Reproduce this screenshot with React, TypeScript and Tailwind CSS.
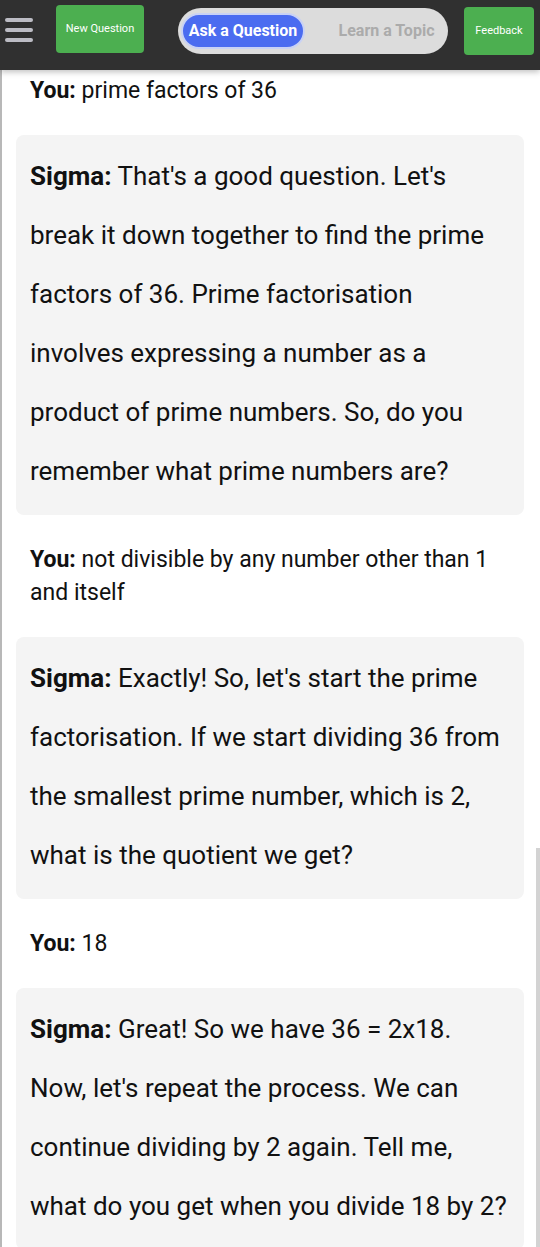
import React from 'react';

type Msg = { from: 'You' | 'Sigma'; text: string };

const messages: Msg[] = [
  { from: 'You', text: 'prime factors of 36' },
  {
    from: 'Sigma',
    text: "That's a good question. Let's break it down together to find the prime factors of 36. Prime factorisation involves expressing a number as a product of prime numbers. So, do you remember what prime numbers are?",
  },
  { from: 'You', text: 'not divisible by any number other than 1 and itself' },
  {
    from: 'Sigma',
    text: "Exactly! So, let's start the prime factorisation. If we start dividing 36 from the smallest prime number, which is 2, what is the quotient we get?",
  },
  { from: 'You', text: '18' },
  {
    from: 'Sigma',
    text: "Great! So we have 36 = 2x18. Now, let's repeat the process. We can continue dividing by 2 again. Tell me, what do you get when you divide 18 by 2?",
  },
];

const App: React.FC = () => {
  return (
    <div className="relative flex min-h-[1247px] flex-col bg-white font-['Roboto',sans-serif] text-[#111]">
      {/* Top bar */}
      <header className="sticky top-0 z-10 flex h-[70px] shrink-0 items-start bg-[#303030] shadow-[0_2px_6px_rgba(0,0,0,0.25)]">
        <button className="ml-[5px] mt-[18px] flex w-[28px] flex-col gap-[6px]">
          <span className="h-[4px] w-full rounded-full bg-[#bcbcc4]" />
          <span className="h-[4px] w-full rounded-full bg-[#bcbcc4]" />
          <span className="h-[4px] w-full rounded-full bg-[#bcbcc4]" />
        </button>
        <button className="ml-[23px] mt-[5px] h-[48px] w-[88px] rounded-[4px] bg-[#4caf50] text-[11px] text-white">
          New Question
        </button>
        <div className="ml-[34px] mt-[8px] flex h-[46px] w-[270px] items-center rounded-full bg-[#dcdcdc] pl-[3px]">
          <div className="flex h-[36px] w-[124px] items-center justify-center rounded-full border-2 border-[#c9d2f5] bg-[#4b6cf0] text-[16px] font-bold text-white">
            Ask a Question
          </div>
          <div className="flex-1 pl-[20px] text-center text-[16px] font-bold text-[#ababab]">Learn a Topic</div>
        </div>
        <button className="ml-[16px] mt-[7px] h-[48px] w-[70px] rounded-[4px] bg-[#4caf50] text-[11px] text-white">
          Feedback
        </button>
      </header>

      {/* Conversation */}
      <main className="flex flex-1 flex-col gap-[28px] border-l-2 border-[#b8b8b8] pl-[14px] pr-[16px] pt-[4px] pb-[40px]">
        {messages.map((m, i) =>
          m.from === 'You' ? (
            <div key={i} className="px-[14px] text-[23px] leading-[33px]">
              <span className="font-bold">You:</span> {m.text}
            </div>
          ) : (
            <div
              key={i}
              className="rounded-[8px] bg-[#f4f4f4] px-[14px] pt-[12px] pb-[14px] text-[26px] leading-[59px]"
            >
              <span className="font-bold">Sigma:</span> {m.text}
            </div>
          )
        )}
      </main>

      {/* scrollbar thumb */}
      <div className="absolute right-0 top-[848px] h-[399px] w-[4px] bg-[#d3d3d3]" />
    </div>
  );
};

export default App;
